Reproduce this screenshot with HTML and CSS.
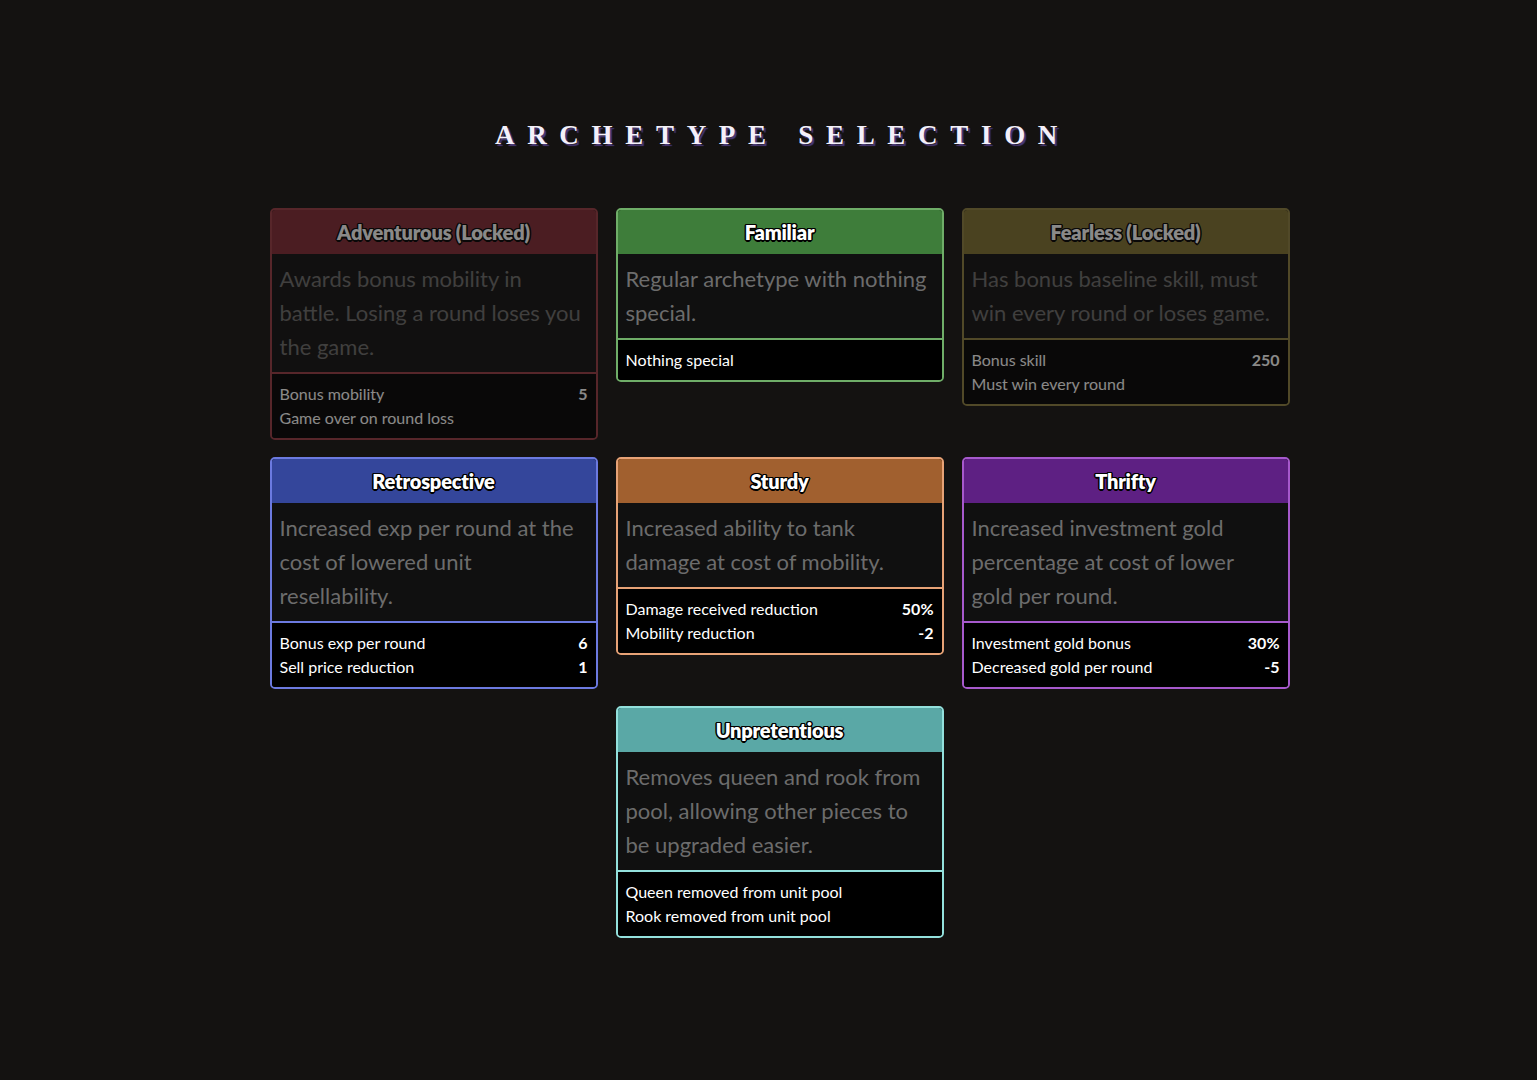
FILE: index.html
```html
<!DOCTYPE html>
<html lang="en">
<head>
<meta charset="utf-8">
<title>Archetype Selection</title>
<link rel="stylesheet" href="styles.css">
</head>
<body>
<main class="page">
  <h1 class="title">Archetype Selection</h1>
  <div class="grid">
    <section class="card red locked">
      <header class="card-head"><h2>Adventurous (Locked)</h2></header>
      <p class="desc">Awards bonus mobility in battle. Losing a round loses you the game.</p>
      <ul class="stats">
        <li><span>Bonus mobility</span><b>5</b></li>
        <li><span>Game over on round loss</span></li>
      </ul>
    </section>
    <section class="card green">
      <header class="card-head"><h2>Familiar</h2></header>
      <p class="desc">Regular archetype with nothing special.</p>
      <ul class="stats">
        <li><span>Nothing special</span></li>
      </ul>
    </section>
    <section class="card olive locked">
      <header class="card-head"><h2>Fearless (Locked)</h2></header>
      <p class="desc">Has bonus baseline skill, must win every round or loses game.</p>
      <ul class="stats">
        <li><span>Bonus skill</span><b>250</b></li>
        <li><span>Must win every round</span></li>
      </ul>
    </section>
    <section class="card blue">
      <header class="card-head"><h2>Retrospective</h2></header>
      <p class="desc">Increased exp per round at the cost of lowered unit resellability.</p>
      <ul class="stats">
        <li><span>Bonus exp per round</span><b>6</b></li>
        <li><span>Sell price reduction</span><b>1</b></li>
      </ul>
    </section>
    <section class="card orange">
      <header class="card-head"><h2>Sturdy</h2></header>
      <p class="desc">Increased ability to tank damage at cost of mobility.</p>
      <ul class="stats">
        <li><span>Damage received reduction</span><b>50%</b></li>
        <li><span>Mobility reduction</span><b>-2</b></li>
      </ul>
    </section>
    <section class="card purple">
      <header class="card-head"><h2>Thrifty</h2></header>
      <p class="desc">Increased investment gold percentage at cost of lower gold per round.</p>
      <ul class="stats">
        <li><span>Investment gold bonus</span><b>30%</b></li>
        <li><span>Decreased gold per round</span><b>-5</b></li>
      </ul>
    </section>
    <section class="card teal center">
      <header class="card-head"><h2>Unpretentious</h2></header>
      <p class="desc">Removes queen and rook from pool, allowing other pieces to be upgraded easier.</p>
      <ul class="stats">
        <li><span>Queen removed from unit pool</span></li>
        <li><span>Rook removed from unit pool</span></li>
      </ul>
    </section>
  </div>
</main>
</body>
</html>
```

FILE: styles.css
```css
* { box-sizing: border-box; }

html, body {
  margin: 0;
  padding: 0;
  background: #141211;
  min-height: 100%;
}

body {
  font-family: "Lato", "Noto Sans", sans-serif;
  color: #fff;
}

.page {
  padding: 118px 0 60px 22px;
  display: flex;
  flex-direction: column;
  align-items: center;
}

.title {
  margin: 0 0 56px 0;
  padding-left: 6px;
  font-family: "Liberation Serif", "Times New Roman", serif;
  font-weight: 700;
  font-size: 27px;
  line-height: 34px;
  text-transform: uppercase;
  letter-spacing: 12.7px;
  color: #f4f0fa;
  text-shadow: 2px 2px 1px #4b3a78;
}

.grid {
  display: grid;
  grid-template-columns: repeat(3, 328px);
  column-gap: 18px;
  row-gap: 17px;
  align-items: start;
}

.card {
  border: 2px solid var(--edge);
  border-radius: 5px;
  overflow: hidden;
  background: #101010;
}

.card.locked { opacity: 0.5; }
.card.center { grid-column: 2; }

.card-head {
  height: 44px;
  background: var(--head);
  display: flex;
  align-items: center;
  justify-content: center;
}

.card-head h2 {
  margin: 0;
  font-size: 20px;
  font-weight: 800;
  color: #fff;
  letter-spacing: -0.2px;
  text-shadow:
    -1px -1px 0 #000, 1px -1px 0 #000, -1px 1px 0 #000, 1px 1px 0 #000,
    0 -1.5px 0 #000, 0 1.5px 0 #000, -1.5px 0 0 #000, 1.5px 0 0 #000;
}

.desc {
  margin: 0;
  padding: 8px 8px 8px 8px;
  font-size: 22px;
  font-weight: 400;
  line-height: 34px;
  color: #6c6c6c;
  background: #101010;
}

.stats {
  list-style: none;
  margin: 0;
  padding: 8px 8px 8px 8px;
  background: #000;
  border-top: 2px solid var(--edge);
}

.stats li {
  display: flex;
  justify-content: space-between;
  font-size: 16px;
  line-height: 24px;
  color: #fff;
}

.stats b {
  font-weight: 700;
  font-size: 16px;
}

.red    { --head: #832833; --edge: #9a3a44; }
.green  { --head: #3e7d3a; --edge: #6fad68; }
.olive  { --head: #80722f; --edge: #8f8040; }
.blue   { --head: #34469b; --edge: #6c7ae0; }
.orange { --head: #a1602f; --edge: #e7a276; }
.purple { --head: #5e2083; --edge: #a659cc; }
.teal   { --head: #5aa8a6; --edge: #93e0dc; }
```
